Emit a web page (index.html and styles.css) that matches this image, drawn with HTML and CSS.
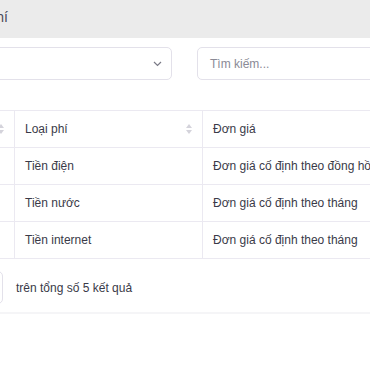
FILE: index.html
```html
<!DOCTYPE html>
<html lang="vi">
<head>
    <meta charset="UTF-8">
    <meta name="viewport" content="width=device-width, initial-scale=1.0">
    <title>Loại phí</title>
    <link rel="stylesheet" href="styles.css">
</head>
<body>
    <div class="page">
        <div class="topbar">
            <span class="title">Danh sách loại phí</span>
        </div>
        <div class="filters">
            <div class="select">
                <span>Tất cả</span>
                <svg width="9" height="6" viewBox="0 0 9 6"><path d="M1 1l3.5 3.5 3.5-3.5" fill="none" stroke="#7a7a86" stroke-width="1.2"/></svg>
            </div>
            <div class="search">Tìm kiếm...</div>
        </div>
        <table class="fees">
            <thead>
                <tr>
                    <th class="col-name"><span>Tên</span><i class="sort"></i></th>
                    <th class="col-type"><span>Loại phí</span><i class="sort"></i></th>
                    <th>Đơn giá</th>
                </tr>
            </thead>
            <tbody>
                <tr><td></td><td>Tiền điện</td><td>Đơn giá cố định theo đồng hồ</td></tr>
                <tr><td></td><td>Tiền nước</td><td>Đơn giá cố định theo tháng</td></tr>
                <tr><td></td><td>Tiền internet</td><td>Đơn giá cố định theo tháng</td></tr>
            </tbody>
        </table>
        <div class="pager">
            <div class="page-size">10</div>
            <span>trên tổng số 5 kết quả</span>
        </div>
        <div class="footer"></div>
    </div>
</body>
</html>
```

FILE: styles.css
```css
body {
    margin: 0;
    font-family: "Liberation Sans", Arial, sans-serif;
    color: #3a3a48;
    background: #fff;
    overflow: hidden;
}
.page {
    margin-left: -260px;
    width: 720px;
}
.topbar {
    height: 38px;
    background: #ebebeb;
    display: flex;
    align-items: center;
    padding-left: 152px;
}
.title {
    font-size: 14px;
    color: #4a4a5a;
    margin-top: -4px;
}
.filters {
    display: flex;
    gap: 25px;
    margin-top: 9px;
    padding-left: 16px;
}
.select, .search {
    border: 1px solid #e3e1ea;
    border-radius: 5px;
    display: flex;
    align-items: center;
    font-size: 12px;
    box-sizing: border-box;
    height: 33px;
}
.select {
    width: 416px;
    justify-content: space-between;
    padding: 0 9px 0 12px;
}
.search {
    flex: 1;
    padding-left: 12px;
    color: #8a8a96;
}
.fees {
    margin-top: 30px;
    margin-left: 16px;
    border-collapse: collapse;
    width: 704px;
    font-size: 12px;
}
.fees th, .fees td {
    border-top: 1px solid #ebe9f1;
    border-bottom: 1px solid #ebe9f1;
    height: 36px;
    padding: 0 10px;
    text-align: left;
    font-weight: normal;
}
.fees th + th, .fees td + td {
    border-left: 1px solid #ebe9f1;
}
.col-name {
    width: 238px;
}
.col-type {
    width: 167px;
}
.col-name span {
    visibility: hidden;
}
.fees th i.sort {
    float: right;
    width: 6px;
    height: 10px;
    margin-top: 2px;
    position: relative;
}
.sort::before, .sort::after {
    content: "";
    position: absolute;
    left: 0;
    border-left: 3px solid transparent;
    border-right: 3px solid transparent;
}
.sort::before {
    top: 0;
    border-bottom: 4px solid #d4d3db;
}
.sort::after {
    bottom: 0;
    border-top: 4px solid #d4d3db;
}
.pager {
    display: flex;
    align-items: center;
    gap: 13px;
    margin-top: 12px;
    font-size: 12px;
    padding-left: 213px;
}
.page-size {
    width: 50px;
    height: 33px;
    box-sizing: border-box;
    border: 1px solid #e3e1ea;
    border-radius: 5px;
    display: flex;
    align-items: center;
    padding-left: 10px;
}
.footer {
    margin-top: 8px;
    border-top: 2px solid #f5f5f7;
}
```
